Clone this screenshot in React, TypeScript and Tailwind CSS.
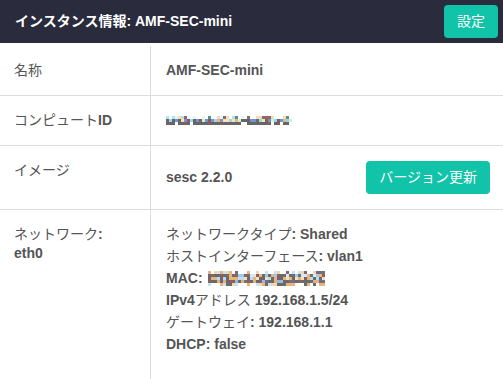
import React from 'react';

// split text so that Japanese runs render regular, Latin runs stay bold
const CJK = /([\u3000-\u30ff\u4e00-\u9fff\uff00-\uffef]+)/;

const Mixed = ({ text }: { text: string }) => (
  <>
    {text.split(CJK).map((part, i) =>
      i % 2 === 1 ? (
        <span key={i} className="font-normal">
          {part}
        </span>
      ) : (
        <React.Fragment key={i}>{part}</React.Fragment>
      )
    )}
  </>
);

// mosaic used to mask private values
const Mosaic = ({
  cols,
  rows,
  size,
  seed,
  palettes,
}: {
  cols: number;
  rows: number;
  size: number;
  seed: number;
  palettes: string[][];
}) => {
  let s = seed;
  const rand = () => {
    s = (s * 1103515245 + 12345) % 2147483648;
    return s / 2147483648;
  };
  const cells: React.ReactNode[] = [];
  for (let r = 0; r < rows; r++) {
    const pal = palettes[r % palettes.length];
    for (let c = 0; c < cols; c++) {
      const color = pal[Math.floor(rand() * pal.length)];
      if (color === 'none') continue;
      cells.push(<rect key={`${r}-${c}`} x={c * size} y={r * size} width={size} height={size} fill={color} />);
    }
  }
  return (
    <svg width={cols * size} height={rows * size} className="inline-block align-middle" shapeRendering="crispEdges">
      {cells}
    </svg>
  );
};

const rowCls = 'flex border-b border-[#dddddd]';
const labelCls = 'w-[151px] shrink-0 border-r border-[#dddddd] pl-[14px] py-[15px] leading-[19px]';

const App = () => {
  const networkLines = [
    'ネットワークタイプ: Shared',
    'ホストインターフェース: vlan1',
    'MAC',
    'IPv4アドレス 192.168.1.5/24',
    'ゲートウェイ: 192.168.1.1',
    'DHCP: false',
  ];

  return (
    <div className="w-[503px] h-[379px] overflow-hidden bg-white flex flex-col font-['Liberation_Sans','Noto_Sans_CJK_JP',sans-serif] text-[14px]">
      {/* Header */}
      <div className="h-[43px] shrink-0 bg-[#2a2b3d] flex items-center justify-between pl-[15px] pr-[5px]">
        <h1 className="text-white font-bold">インスタンス情報: AMF-SEC-mini</h1>
        <button className="h-[33px] px-[13px] rounded bg-[#10c3a9] text-white">設定</button>
      </div>

      {/* Detail table */}
      <div className="mt-[3px] flex-1 flex flex-col text-[#555555] font-bold">
        <div className={rowCls}>
          <div className={labelCls}>
            <Mixed text="名称" />
          </div>
          <div className="flex-1 pl-[15px] py-[15px] leading-[19px]">AMF-SEC-mini</div>
        </div>

        <div className={rowCls}>
          <div className={labelCls}>
            <Mixed text="コンピュートID" />
          </div>
          <div className="flex-1 pl-[15px] py-[15px] leading-[19px] flex items-center">
            <Mosaic
              cols={42}
              rows={3}
              size={3}
              seed={7}
              palettes={[
                ['none', 'none', 'none', '#5e8f8c', '#aee3f2', '#f6dcae', '#8d6a6a', '#e8f4f8'],
                ['#e9b47a', '#666666', '#9ad7f3', '#8b5a5a', '#f9e2b4', '#6d95d8', '#c8f3d6', '#666666', '#696969'],
                ['#666666', '#666666', '#666666', '#666666', 'none', '#666666', '#8b5a5a', '#666666'],
              ]}
            />
          </div>
        </div>

        <div className={rowCls}>
          <div className={labelCls}>
            <Mixed text="イメージ" />
          </div>
          <div className="flex-1 pl-[15px] pr-[13px] py-[15px] flex items-center justify-between">
            <span>sesc 2.2.0</span>
            <button className="h-[33px] px-[13px] rounded bg-[#10c3a9] text-white font-normal">バージョン更新</button>
          </div>
        </div>

        <div className="flex flex-1">
          <div className="w-[151px] shrink-0 border-r border-[#dddddd] pl-[14px] pt-[15px] leading-[19px]">
            <div>
              <Mixed text="ネットワーク:" />
            </div>
            <div>eth0</div>
          </div>
          <div className="flex-1 pl-[15px] pt-[13px] leading-[22px]">
            {networkLines.map((line) =>
              line === 'MAC' ? (
                <div key={line} className="flex items-center gap-[5px]">
                  <span>MAC:</span>
                  <Mosaic
                    cols={39}
                    rows={5}
                    size={3}
                    seed={31}
                    palettes={[
                      ['none', '#f3d6ad', 'none', '#c4e6f4', '#7c6a7a', 'none', '#e8b47c'],
                      ['#8b6060', '#6a6a6a', '#e9b47a', '#6e6e6e', '#d9e8f8', '#9fc8ea'],
                      ['#6a6a6a', '#e9b47a', '#b6def2', '#7b5f6a', '#f6e0b8', '#6a6a6a'],
                      ['#7c6b7c', '#6a6a6a', '#e3b07e', '#9ab7e6', '#8b6060', '#6a6a6a'],
                      ['none', '#f3d6ad', '#6a6a6a', 'none', '#c4e6f4', '#e9b47a'],
                    ]}
                  />
                </div>
              ) : (
                <div key={line}>
                  <Mixed text={line} />
                </div>
              )
            )}
          </div>
        </div>
      </div>
    </div>
  );
};

export default App;
